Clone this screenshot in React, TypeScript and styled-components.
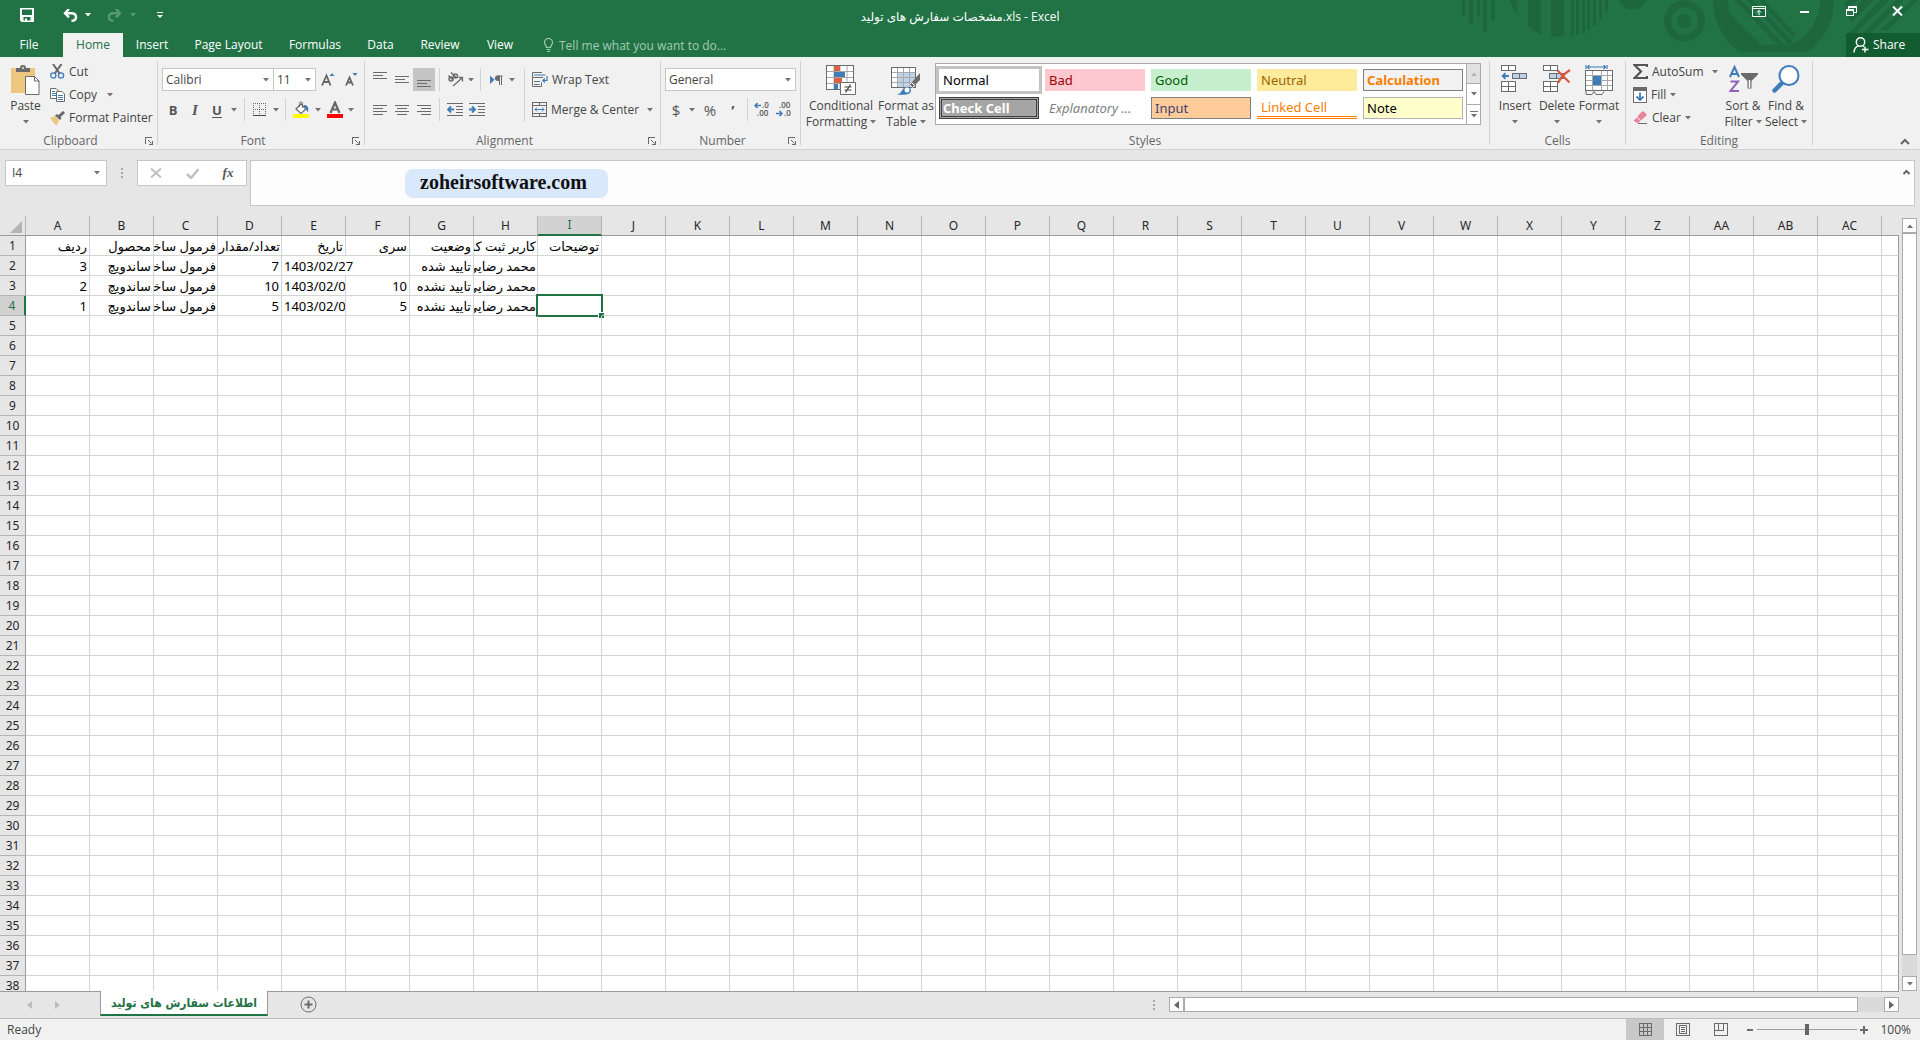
import React from 'react';
import styled, { createGlobalStyle, css } from 'styled-components';

const GREEN = '#217346';
const LINE = '#d4d4d4';
const UI = '"Open Sans", "Noto Sans", "DejaVu Sans", sans-serif';
const SHEET = '"Noto Sans", "DejaVu Sans", sans-serif';

const Global = createGlobalStyle`
  *, *::before, *::after { box-sizing: border-box; }
  body { margin: 0; background: #e6e6e6; color: #444; font: 12px/16px ${UI}; overflow: hidden; }
  button, input, select, textarea { margin: 0; padding: 0; border: 0; background: none; color: inherit; font: inherit; }
  svg { display: block; flex: none; }
`;

const Window = styled.div`
  display: flex;
  flex-direction: column;
  height: 100vh;
`;

/* ---------- title bar and tabs ---------- */

const Top = styled.header`
  position: relative;
  background: ${GREEN};
  color: #fff;
`;

const Pattern = styled.svg`
  position: absolute;
  top: 0;
  right: 0;
  fill: #1e673e;
  stroke: none;
`;

const TitleRow = styled.div`
  position: relative;
  display: grid;
  grid-template-columns: 1fr auto 1fr;
  height: 33px;
`;

const Quick = styled.div`
  display: flex;
  align-items: center;
  height: 30px;
  padding-left: 16px;
`;

const QuickButton = styled.button<{ $w: number; $gap?: number; $faded?: boolean }>`
  display: flex;
  align-items: center;
  justify-content: center;
  width: ${p => p.$w}px;
  height: 22px;
  margin-left: ${p => p.$gap ?? 0}px;
  color: #fff;
  opacity: ${p => (p.$faded ? 0.25 : 1)};
`;

const Title = styled.h1`
  margin: 0;
  font-size: 12px;
  font-weight: 400;
  line-height: 33px;
`;

const WindowButtons = styled.div`
  display: flex;
  justify-content: flex-end;
  height: 30px;
`;

const TabRow = styled.nav`
  position: relative;
  display: flex;
  height: 24px;
`;

const Tab = styled.button<{ $w: number; $active?: boolean }>`
  width: ${p => p.$w}px;
  line-height: 24px;
  color: ${p => (p.$active ? GREEN : '#fff')};
  background: ${p => (p.$active ? '#f1f1f1' : 'transparent')};
`;

const FileTab = styled(Tab)`
  margin-right: 5px;
`;

const TellMe = styled.label`
  display: flex;
  align-items: center;
  gap: 5px;
  margin-left: 16px;
  color: #a3cbb3;
`;

const TellInput = styled.input`
  width: 200px;
  height: 24px;
  outline: none;
  &::placeholder { color: #a3cbb3; opacity: 1; }
`;

const Share = styled.button`
  display: flex;
  align-items: center;
  gap: 4px;
  width: 74px;
  margin-left: auto;
  padding-left: 7px;
  background: #125c32;
  color: #fff;
`;

/* ---------- ribbon ---------- */

const Ribbon = styled.section`
  display: flex;
  height: 93px;
  background: #f1f1f1;
  border-bottom: 1px solid #d2d2d2;
`;

const Group = styled.div<{ $w: number }>`
  display: flex;
  flex-direction: column;
  flex: none;
  width: ${p => p.$w}px;
`;

const GroupBody = styled.div<{ $pad?: number }>`
  display: flex;
  height: 76px;
  padding-left: ${p => p.$pad ?? 4}px;
`;

const GroupFooter = styled.div`
  display: flex;
  align-items: center;
  height: 16px;
  padding: 0 4px;
  color: #666;
`;

const GroupLabel = styled.span<{ $pad: number }>`
  flex: 1;
  padding-right: ${p => p.$pad}px;
  text-align: center;
`;

const GroupLine = styled.div`
  width: 1px;
  margin: 4px 0;
  background: ${LINE};
`;

const Big = styled.button<{ $w: number }>`
  display: flex;
  flex-direction: column;
  align-items: center;
  flex: none;
  width: ${p => p.$w}px;
  padding-top: 8px;
  white-space: nowrap;
  > svg { margin-bottom: 3px; }
`;

const BigLine = styled.span`
  display: flex;
  align-items: center;
  gap: 3px;
  height: 16px;
`;

const Stack = styled.div<{ $w?: number }>`
  display: flex;
  flex-direction: column;
  width: ${p => (p.$w ? p.$w + 'px' : 'auto')};
  padding-top: 3px;
`;

const Small = styled.button`
  display: flex;
  align-items: center;
  gap: 4px;
  height: 23px;
  white-space: nowrap;
`;

const Rows = styled.div<{ $w?: number }>`
  display: flex;
  flex-direction: column;
  gap: 7px;
  width: ${p => (p.$w ? p.$w + 'px' : 'auto')};
  padding-top: 11px;
`;

const Row = styled.div`
  display: flex;
  height: 23px;
`;

const Tool = styled.button<{ $w?: number; $on?: boolean }>`
  display: flex;
  align-items: center;
  justify-content: center;
  flex: none;
  width: ${p => p.$w ?? 22}px;
  height: 23px;
  color: #555;
  background: ${p => (p.$on ? '#c5c5c5' : 'transparent')};
`;

const Glyph = styled.span<{ $size?: number; $kind?: 'italic' | 'underline' | 'light' }>`
  font-size: ${p => p.$size ?? 13}px;
  font-weight: ${p => (p.$kind === 'light' ? 400 : 700)};
  ${p => p.$kind === 'italic' && css`font-family: "Liberation Serif", serif; font-style: italic;`}
  ${p => p.$kind === 'underline' && css`text-decoration: underline; text-underline-offset: 2px;`}
`;

const Divider = styled.div`
  width: 1px;
  margin: 0 4px;
  background: ${LINE};
`;

const TallDivider = styled.div`
  width: 1px;
  height: 54px;
  margin: 11px 7px 0 0;
  background: ${LINE};
`;

const ComboBox = styled.label<{ $w: number }>`
  display: grid;
  align-items: center;
  width: ${p => p.$w}px;
  height: 23px;
  border: 1px solid #c6c6c6;
  background: #fff;
  & + & { margin-left: -1px; }
  > * { grid-area: 1 / 1; }
  > svg { justify-self: end; margin-right: 4px; pointer-events: none; }
`;

const Select = styled.select`
  appearance: none;
  width: 100%;
  height: 21px;
  padding-left: 3px;
  outline: none;
`;

const Gallery = styled.div`
  display: flex;
  margin-top: 6px;
  height: 62px;
  border: 1px solid #ababab;
  background: #fff;
`;

const Swatches = styled.div`
  display: grid;
  grid-template-columns: repeat(5, 100px);
  grid-auto-rows: 22px;
  gap: 6px;
  padding: 5px 3px;
`;

type SwatchStyle = { bg: string; fg: string; line?: string; kind?: string };
const Swatch = styled.button<{ $s: SwatchStyle }>`
  padding: 0 3px 1px;
  text-align: left;
  font: 13px/18px ${SHEET};
  color: ${p => p.$s.fg};
  background: ${p => p.$s.bg};
  border: ${p => (p.$s.line ? `1px solid ${p.$s.line}` : '1px solid transparent')};
  ${p => p.$s.kind === 'selected' && css`box-shadow: 0 0 0 3px #c3c3c3;`}
  ${p => p.$s.kind === 'check' && css`border: 3px double #3f3f3f; padding: 0 1px 1px; line-height: 16px; font-weight: 700;`}
  ${p => p.$s.kind === 'bold' && css`font-weight: 700;`}
  ${p => p.$s.kind === 'italic' && css`font-style: italic;`}
  ${p => p.$s.kind === 'linked' && css`border: 0; border-bottom: 3px double #ff8001; padding: 0 4px;`}
`;

const GalleryButtons = styled.div`
  display: flex;
  flex-direction: column;
  width: 14px;
  border-left: 1px solid #ababab;
`;

const GalleryButton = styled.button<{ $off?: boolean }>`
  display: flex;
  flex: 1;
  align-items: center;
  justify-content: center;
  background: ${p => (p.$off ? '#e1e1e1' : '#fff')};
  & + & { border-top: 1px solid #ababab; }
`;

const Collapse = styled.button`
  align-self: flex-end;
  margin: 0 10px 4px auto;
`;

/* ---------- formula bar ---------- */

const FormulaRow = styled.section`
  display: flex;
  align-items: flex-start;
  padding: 10px 5px;
`;

const NameBox = styled.div`
  display: flex;
  align-items: center;
  width: 102px;
  height: 26px;
  padding-right: 6px;
  border: 1px solid #c6c6c6;
  background: #fff;
`;

const NameInput = styled.input`
  flex: 1;
  min-width: 0;
  padding-left: 6px;
  outline: none;
`;

const Dots = styled.span`
  display: flex;
  justify-content: center;
  width: 30px;
  padding-top: 8px;
`;

const EntryButtons = styled.div`
  display: flex;
  align-items: center;
  justify-content: space-between;
  width: 110px;
  height: 26px;
  padding: 0 11px;
  border: 1px solid #c6c6c6;
  background: #fff;
`;

const FormulaBox = styled.div`
  display: flex;
  flex: 1;
  justify-content: space-between;
  align-items: flex-start;
  height: 46px;
  margin-left: 3px;
  padding: 8px 4px 0 154px;
  border: 1px solid #c6c6c6;
  background: #fdfdfd;
`;

const Site = styled.span`
  width: 203px;
  padding-bottom: 3px;
  padding-right: 6px;
  border-radius: 8px;
  background: #dae8fc;
  color: #111;
  text-align: center;
  font: 700 20px/26px "Liberation Serif", serif;
`;

/* ---------- sheet ---------- */

const SheetArea = styled.main`
  display: flex;
  flex: 1;
  min-height: 0;
`;

const GridView = styled.div`
  flex: 1;
  min-width: 0;
  overflow: hidden;
`;

const Table = styled.table`
  width: 100%;
  table-layout: fixed;
  border-spacing: 0;
  background: #fff;
  color: #000;
  font: 13px/18px ${SHEET};
`;

const RowCol = styled.col`
  width: 26px;
`;

const DataCol = styled.col`
  width: 64px;
`;

const ColHead = styled.th<{ $on?: boolean; $last?: boolean }>`
  height: 20px;
  padding: 0;
  font-weight: 400;
  font-size: 12px;
  color: ${p => (p.$on ? GREEN : '#262626')};
  background: ${p => (p.$on ? '#d2d2d2' : '#e6e6e6')};
  border-bottom: ${p => (p.$on ? `2px solid ${GREEN}` : '1px solid #9b9b9b')};
  border-right: ${p => (p.$last ? '0' : '1px solid #b4b4b4')};
`;

const Corner = styled(ColHead)`
  > svg { margin: 2px 3px 0 auto; }
`;

const RowHead = styled.th<{ $on?: boolean }>`
  height: 20px;
  padding: 0;
  font-weight: 400;
  font-size: 12px;
  color: ${p => (p.$on ? GREEN : '#262626')};
  background: ${p => (p.$on ? '#d2d2d2' : '#e6e6e6')};
  border-bottom: 1px solid #b4b4b4;
  border-right: ${p => (p.$on ? `2px solid ${GREEN}` : '1px solid #9b9b9b')};
`;

const Cell = styled.td<{ $left?: boolean; $edge?: boolean }>`
  position: relative;
  height: 20px;
  padding: 0 2px;
  overflow: hidden;
  white-space: nowrap;
  text-align: ${p => (p.$left ? 'left' : 'right')};
  border-bottom: 1px solid ${LINE};
  border-right: 1px solid ${p => (p.$edge ? '#9b9b9b' : LINE)};
`;

const ActiveCell = styled(Cell)`
  overflow: visible;
  &::before {
    content: '';
    position: absolute;
    inset: -2px;
    border: 2px solid ${GREEN};
  }
  &::after {
    content: '';
    position: absolute;
    right: -3px;
    bottom: -3px;
    width: 6px;
    height: 6px;
    border: solid #fff;
    border-width: 1px 0 0 1px;
    background: ${GREEN};
  }
`;

const VScroll = styled.div`
  display: flex;
  flex-direction: column;
  width: 15px;
  margin: 2px 3px 0;
  background: #dadada;
`;

const HScroll = styled.div`
  display: flex;
  width: 730px;
  height: 15px;
  background: #dadada;
`;

const ScrollButton = styled.button`
  display: flex;
  flex: none;
  align-items: center;
  justify-content: center;
  width: 15px;
  height: 15px;
  border: 1px solid #ababab;
  background: #fff;
  color: #666;
`;

const Thumb = styled.div<{ $grow: number }>`
  flex: ${p => p.$grow} 0 0;
  border: 1px solid #ababab;
  background: #fff;
`;

const Slack = styled.div<{ $grow: number }>`
  flex: ${p => p.$grow} 0 0;
`;

const SheetBar = styled.footer`
  display: flex;
  align-items: center;
  height: 27px;
  padding-right: 21px;
  background: linear-gradient(#9b9b9b, #9b9b9b) 0 0 / calc(100% - 21px) 1px no-repeat #e6e6e6;
`;

const SheetNav = styled.div`
  display: flex;
  align-items: center;
  justify-content: center;
  gap: 23px;
  width: 86px;
  color: #bdbdbd;
`;

const SheetTab = styled.button`
  align-self: flex-start;
  width: 168px;
  height: 25px;
  margin-left: 14px;
  border: solid #9b9b9b;
  border-width: 0 1px 0 1px;
  border-bottom: 2px solid ${GREEN};
  background: #fff;
  color: ${GREEN};
  font: 700 12px/16px "DejaVu Sans Condensed", "DejaVu Sans", sans-serif;
  white-space: nowrap;
`;

const AddSheet = styled.button`
  margin-left: 32px;
`;

const BarGrip = styled.span`
  margin: 0 14px 0 auto;
`;

const Status = styled.footer`
  display: flex;
  align-items: center;
  height: 22px;
  padding: 0 9px 0 7px;
  border-top: 1px solid #bdbdbd;
  background: #f1f1f1;
`;

const ViewButtons = styled.div`
  display: flex;
  align-self: stretch;
  margin: 0 3px 0 auto;
`;

const ViewButton = styled.button<{ $on?: boolean }>`
  display: flex;
  align-items: center;
  justify-content: center;
  width: 38px;
  background: ${p => (p.$on ? '#c8c8c8' : 'transparent')};
`;

const ZoomButton = styled.button`
  width: 14px;
  display: flex;
  justify-content: center;
`;

const ZoomSlider = styled.input`
  appearance: none;
  width: 100px;
  height: 12px;
  background: linear-gradient(#a0a0a0, #a0a0a0) 0 50% / 100% 1px no-repeat;
  outline: none;
  &::-webkit-slider-thumb {
    appearance: none;
    width: 4px;
    height: 11px;
    background: #666;
  }
`;

const ZoomValue = styled.button`
  width: 40px;
  text-align: right;
`;

/* ---------- icons ---------- */

const G = '#6b6b6b';
const BLUE = '#3f7cb8';

type IconProps = { w: number; h: number; children: React.ReactNode; crisp?: boolean };
const Icon = ({ w, h, children, crisp }: IconProps) => (
  <svg width={w} height={h} viewBox={`0 0 ${w} ${h}`} fill="none" stroke={G} shapeRendering={crisp ? 'crispEdges' : 'auto'} aria-hidden="true">
    {children}
  </svg>
);

const Caret = ({ dir = 'down', color = '#737373' }: { dir?: 'down' | 'up'; color?: string }) => (
  <svg width="6" height="4" viewBox="0 0 6 4" fill={color} aria-hidden="true">
    <path d={dir === 'down' ? 'M0 0h6L3 3.5z' : 'M0 4h6L3 .5z'} />
  </svg>
);

const Side = ({ dir }: { dir: 'left' | 'right' }) => (
  <svg width="5" height="8" viewBox="0 0 5 8" fill="currentColor" aria-hidden="true">
    <path d={dir === 'left' ? 'M5 0v8L0 4z' : 'M0 0v8l5-4z'} />
  </svg>
);

const Grip = () => (
  <svg width="2" height="10" viewBox="0 0 2 10" fill="#a6a6a6" aria-hidden="true"><path d="M0 0h2v2H0zM0 4h2v2H0zM0 8h2v2H0z" /></svg>
);

const Chevron = () => (
  <Icon w={10} h={7}><path d="M1 6l4-4 4 4" stroke="#666" strokeWidth="2" /></Icon>
);

const Launcher = () => (
  <Icon w={8} h={8} crisp>
    <path d="M.5 7V.5H7" />
    <path d="M3 3l3.5 3.5" shapeRendering="auto" />
    <path d="M7.5 4v3.5H4" strokeWidth="2" />
  </Icon>
);

const Lines = ({ widths, x = 'left', top = 1 }: { widths: number[]; x?: 'left' | 'center' | 'right'; top?: number }) => (
  <Icon w={14} h={16} crisp>
    {widths.map((w, i) => {
      const s = x === 'left' ? 0 : x === 'right' ? 14 - w : (14 - w) / 2;
      return <path key={i} d={`M${s} ${top + i * 3 + 0.5}h${w}`} />;
    })}
  </Icon>
);

const Save = () => (
  <Icon w={14} h={14}>
    <path fill="#fff" stroke="none" fillRule="evenodd" d="M0 0h14v14H1.5L0 12.5zM2 1.5V7h10V1.5zM3.5 9v3.5H5V10.5h2v2h3.5V9z" />
  </Icon>
);
const Undo = () => (
  <Icon w={15} h={13}>
    <path d="M6 0L2 4.200l4 4.200M2 4.200h6.500q4.500 0 4.500 3.800t-4.500 3.800" stroke="#fff" strokeWidth="2.400" />
  </Icon>
);
const Redo = () => (
  <Icon w={15} h={13}>
    <path d="M9 0l4 4.200-4 4.200M13 4.200H6.500Q2 4.200 2 8t4.500 3.800" stroke="#fff" strokeWidth="2.400" />
  </Icon>
);
const Customize = () => (
  <Icon w={6} h={7}><path d="M0 .5h6" stroke="#fff" /><path d="M0 3h6L3 6z" fill="#fff" stroke="none" /></Icon>
);
const RibbonOptions = () => (
  <Icon w={14} h={11}>
    <path d="M.5.5h13v10H.5zM1 2.500h12M7 9V4.500M4.800 6.500L7 4.300l2.200 2.200" stroke="#fff" />
  </Icon>
);
const Minimize = () => <Icon w={10} h={10} crisp><path d="M0 6h9" stroke="#fff" strokeWidth="2" /></Icon>;
const Restore = () => (
  <Icon w={11} h={10} crisp><path d="M.5 3.500h7v6h-7zM0 4.500h8M2.500 3V.5h8v6H8M2 1.500h9" stroke="#fff" /></Icon>
);
const Close = () => <Icon w={11} h={10}><path d="M1 .5l9 9M10 .5l-9 9" stroke="#fff" strokeWidth="2" /></Icon>;
const Bulb = () => (
  <Icon w={11} h={14}>
    <path d="M3.500 9.500C3.500 7.500 1.500 7 1.500 4.500a4 4 0 0 1 8 0c0 2.500-2 3-2 5zM3.500 11.500h4M4 13.500h3" stroke="#a3cbb3" strokeWidth="1.200" />
  </Icon>
);
const Person = () => (
  <Icon w={16} h={16}>
    <circle cx="7.500" cy="5" r="4.200" stroke="#fff" strokeWidth="1.400" />
    <path d="M1 15.500c.2-3.500 1.800-5.800 4.500-6.600M10 9l1 .7M12 9.500v6M9 12.500h6.500" stroke="#fff" strokeWidth="1.400" />
  </Icon>
);

const Paste = () => (
  <Icon w={29} h={30}>
    <path d="M0 3h24v25H0z" fill="#eec77f" stroke="none" />
    <path d="M5 3h4a3 3 0 0 1 6 0h4v4H5z" fill="#6b6b6b" stroke="none" />
    <circle cx="12" cy="3" r="1" fill="#f1f1f1" stroke="none" />
    <path d="M14.500 11.500h9l4.500 4.500v13.500H14.500z" fill="#fff" />
    <path d="M23.500 11.500V16H28" />
  </Icon>
);
const Cut = () => (
  <Icon w={15} h={15}>
    <path d="M3 0l7 10M11.500 0l-7 10" strokeWidth="2" stroke="#666" />
    <circle cx="3.300" cy="11.500" r="2.600" stroke={BLUE} strokeWidth="1.300" />
    <circle cx="11" cy="11.500" r="2.600" stroke={BLUE} strokeWidth="1.300" />
  </Icon>
);
const Copy = () => (
  <Icon w={15} h={14}>
    <path d="M.5.5H6L8.500 3v7.500h-8z" fill="#fff" />
    <path d="M2 3.500h3M2 5.500h4M2 7.500h4" stroke={BLUE} />
    <path d="M6.500 3.500H12L14.500 6v7.500h-8z" fill="#fff" />
    <path d="M8 7.500h5M8 9.500h5M8 11.500h5" stroke={BLUE} />
  </Icon>
);
const Painter = () => (
  <Icon w={15} h={14}>
    <path d="M0 7l5-2 4 4-2 5-2-.5z" fill="#eec77f" stroke="none" />
    <path d="M5 4.500l2-1.500 4.500 4L10 9z" fill="#666" stroke="none" />
    <path d="M9 5.500L14 1" strokeWidth="3" stroke="#666" />
  </Icon>
);
const Grow = ({ up }: { up?: boolean }) => (
  <Icon w={14} h={15}>
    <path d={up ? 'M1 13.500L5.500 3.500l4 10M3 10h5.500' : 'M2 13.500L5.500 5.500l3.500 8M3.500 10.500h4.500'} strokeWidth="1.800" stroke="#666" />
    <path d={up ? 'M8.500 4h5L11 1z' : 'M8.500 1h5L11 4z'} fill={BLUE} stroke="none" />
  </Icon>
);
const Borders = () => (
  <Icon w={14} h={14} crisp>
    <path d="M.5 0v12M6.500 0v12M12.500 0v12M0 .5h13M0 6.500h13" strokeDasharray="1 1" />
    <path d="M0 12.500h13" stroke="#444" />
  </Icon>
);
const Bucket = () => (
  <Icon w={16} h={17}>
    <path d="M3 8l5-5 5 5-5 4.500z" fill="#fff" strokeWidth="1.300" />
    <path d="M6.500 6V2.500a1.500 1.500 0 0 1 3 0V7" />
    <path d="M11 4c4 0 5 3 4 7-2-1-1-4-4-5z" fill={BLUE} stroke="none" />
    <path d="M0 13h16v4H0z" fill="#ff0" stroke="none" />
  </Icon>
);
const FontColor = () => (
  <Icon w={16} h={17}>
    <path d="M3.500 12L8 1.500 12.500 12M5 8.500h6" strokeWidth="2.200" stroke="#666" />
    <path d="M0 13h16v4H0z" fill="#f00" stroke="none" />
  </Icon>
);
const Orient = () => (
  <Icon w={17} h={15}>
    <circle cx="4" cy="7" r="2" strokeWidth="1.500" /><path d="M1.500 3.500l5 5" strokeWidth="1.500" />
    <circle cx="8.500" cy="4" r="2" strokeWidth="1.500" /><path d="M4 .5l5 5" strokeWidth="1.500" />
    <path d="M6 14l9-8M11.500 5.500H15.500V9.500" strokeWidth="1.300" />
  </Icon>
);
const Pilcrow = () => (
  <Icon w={13} h={10}>
    <path d="M0 .5v8.500l4.500-4.200z" fill={BLUE} stroke="none" />
    <path d="M9 1H7.500a2 2 0 0 0 0 4.500H9z" fill={G} />
    <path d="M9.500 1v9M11.500 1v9M7 1h5.500" />
  </Icon>
);
const Indent = ({ out }: { out?: boolean }) => (
  <Icon w={16} h={14} crisp>
    <path d="M0 .5h16M9 3.500h7M9 6.500h7M9 9.500h7M0 12.500h16" />
    <path d={out ? 'M1 6.500h6M4 3.500l-3 3 3 3' : 'M0 6.500h6M3 3.500l3 3-3 3'} stroke={BLUE} strokeWidth="1.800" shapeRendering="auto" />
  </Icon>
);
const Wrap = () => (
  <Icon w={16} h={16}>
    <path d="M10 .5H.5v5H11M.5 5.500v9h9v-4M2 9.500h6M2 12.500h5.500" />
    <path d="M2 3h11.500M15 4v4.500h-4M13 6.500l-2.200 2 2.200 2" stroke={BLUE} strokeWidth="1.200" />
  </Icon>
);
const Merge = () => (
  <Icon w={15} h={15} crisp>
    <path d="M.5.5h14v14H.5zM0 3.500h15M0 11.500h15M7.500 0v3M7.500 12v3" />
    <path d="M3 7.500h9" stroke={BLUE} />
    <path d="M5 5.500l-2 2 2 2M10 5.500l2 2-2 2" stroke={BLUE} shapeRendering="auto" />
  </Icon>
);

const DecimalText = styled.text`
  font: 600 8px ${UI};
  fill: #555;
  stroke: none;
`;
const Decimal = ({ more }: { more?: boolean }) => (
  <Icon w={17} h={19}>
    <DecimalText x={more ? 8 : 3} y="8">{more ? '.0' : '.00'}</DecimalText>
    <DecimalText x={more ? 3 : 8} y="16">{more ? '.00' : '.0'}</DecimalText>
    <path d={more ? 'M7 5.500H1M3.500 3L1 5.500 3.500 8' : 'M0 13.500h6M3.500 11L6 13.500 3.500 16'} stroke={BLUE} strokeWidth="1.500" />
  </Icon>
);

const CondFormat = () => (
  <Icon w={30} h={30}>
    <path d="M.5.5h27v24H.5z" fill="#fff" />
    <path d="M.5 6.500h27M.5 12.500h27M.5 18.500h27M8 .5v24M14 .5v24M21 .5v24" stroke="#a8a8a8" />
    <path d="M8 1h6v5H8zM8 13h8v5H8z" fill="#d9633f" stroke="none" />
    <path d="M8 7h11v5H8zM8 19h4v5H8z" fill={BLUE} stroke="none" />
    <path d="M.5.5h27v24H.5z" />
    <path d="M14.500 17.500h15v12h-15z" fill="#fff" />
    <path d="M18.500 22h7M18.500 25h7M24.500 19.500l-5 8" strokeWidth="1.200" stroke="#444" />
  </Icon>
);
const FormatTable = () => (
  <Icon w={30} h={30}>
    <path d="M.5 2.500h24v20H.5z" fill="#fff" />
    <path d="M6.500 8h18v14h-18z" fill="#bcd2e8" stroke="none" />
    <path d="M.5 7.500h24M.5 12.500h24M.5 17.500h24M6.500 2.500v20M12.500 2.500v20M18.500 2.500v20" stroke="#a8a8a8" />
    <path d="M.5 2.500h24v20H.5z" />
    <path d="M29 8v7l-5 5-3-3z" fill="#6b6b6b" stroke="none" />
    <path d="M20.500 17.500l3 3-2 2-3-3z" fill="#6b6b6b" stroke="#f1f1f1" />
    <path d="M6 29.500c4-1 4-3 6-5.500 3-4 8-2 8 1.500 0 4-6 5-14 4z" fill={BLUE} stroke="none" />
    <circle cx="16" cy="25" r="2.500" fill="#fff" stroke="none" />
  </Icon>
);
const CellIcon = ({ remove }: { remove?: boolean }) => (
  <Icon w={28} h={30}>
    <g shapeRendering="crispEdges">
      <path d="M.5.5h14v5H.5zM7.500.5v5M.5 16.500h14v10H.5zM7.500 16.500v10M.5 21.500h14" fill="#fff" />
      <path d={remove ? 'M6.500 8.500h14v5h-14zM13.500 8.500v5' : 'M11.500 8.500h14v5h-14zM18.500 8.500v5'} fill="#bcd2e8" />
    </g>
    {remove
      ? <path d="M14.500 5.500l12 12M27 5q-8 5-12 13" stroke="#d9583b" strokeWidth="2.200" />
      : <path d="M8 11H2M4.500 8.200L1.700 11l2.800 2.800" stroke={BLUE} strokeWidth="1.800" />}
  </Icon>
);
const FormatCells = () => (
  <Icon w={28} h={30}>
    <path d="M.5 5.500h27v20H.5z" fill="#fff" />
    <path d="M.5 10.500h27M.5 15.500h27M.5 20.500h27M7.500 5.500v20M16.500 5.500v20M22.500 5.500v20" stroke="#a8a8a8" />
    <path d="M.5 5.500h27v20H.5zM1 26v3.500h6l2-3 2 3h6l2-3" />
    <path d="M8 11h8v9H8z" fill={BLUE} stroke="none" />
    <path d="M1 0v4M22 0v4M2 2h19M4.500 0l-2 2 2 2M18.500 0l2 2-2 2" stroke={BLUE} strokeWidth="1.200" />
  </Icon>
);
const Sigma = () => <Icon w={15} h={15}><path d="M14 3V1H1.500L8 7.500 1.500 14H14v-2" strokeWidth="2.200" stroke="#555" /></Icon>;
const Fill = () => (
  <Icon w={14} h={16}>
    <path d="M.5.5h13v15H.5z" fill="#fff" /><path d="M0 0h14v4H0z" fill={G} stroke="none" />
    <path d="M7 5.500V13M3.500 9.500L7 13l3.500-3.500" stroke={BLUE} strokeWidth="1.800" />
  </Icon>
);
const Eraser = () => (
  <Icon w={15} h={13}>
    <path d="M4 6l5-5.500h2L14 4 8 9.500z" fill="#e9859a" stroke="none" />
    <path d="M3.500 6.500L.5 9.500 3 12h2.500L8 9.800z" fill="#e9859a" stroke="#f1f1f1" strokeWidth=".6" />
    <path d="M5 12.500h9" />
  </Icon>
);
const SortFilter = () => (
  <Icon w={29} h={30}>
    <path d="M1 12L5.500 2 10 12M2.500 9h6" stroke={BLUE} strokeWidth="2" />
    <path d="M1.500 16.500H9L1.500 26H10" stroke="#9160bd" strokeWidth="2" />
    <path d="M12 8h17v1.500L22.500 16v7.500h-4V16L12 9.500z" fill="#6b6b6b" stroke="none" />
    <path d="M20.500 15v8" stroke="#fff" strokeWidth="1.500" />
  </Icon>
);
const Find = () => (
  <Icon w={28} h={30}>
    <path d="M2.500 25.500L10 18" stroke={BLUE} strokeWidth="4.500" strokeLinecap="round" />
    <circle cx="17" cy="10.500" r="9.500" fill="#fff" stroke={BLUE} strokeWidth="2" />
  </Icon>
);

/* ---------- data ---------- */

const TABS: [string, number][] = [
  ['Insert', 58], ['Page Layout', 95], ['Formulas', 78], ['Data', 53], ['Review', 66], ['View', 54],
];

const STYLES: [string, SwatchStyle][] = [
  ['Normal', { bg: '#fff', fg: '#000', kind: 'selected' }],
  ['Bad', { bg: '#ffc7ce', fg: '#9c0006' }],
  ['Good', { bg: '#c6efce', fg: '#006100' }],
  ['Neutral', { bg: '#ffeb9c', fg: '#9c6500' }],
  ['Calculation', { bg: '#f2f2f2', fg: '#fa7d00', line: '#7f7f7f', kind: 'bold' }],
  ['Check Cell', { bg: '#a5a5a5', fg: '#fff', kind: 'check' }],
  ['Explanatory ...', { bg: '#fff', fg: '#7f7f7f', kind: 'italic' }],
  ['Input', { bg: '#ffcc99', fg: '#3f3f76', line: '#7f7f7f' }],
  ['Linked Cell', { bg: '#fff', fg: '#fa7d00', kind: 'linked' }],
  ['Note', { bg: '#ffffcc', fg: '#000', line: '#b2b2b2' }],
];

const COLUMNS = [...'ABCDEFGHIJKLMNOPQRSTUVWXYZ', 'AA', 'AB', 'AC'];

const DATA: string[][] = [
  ['ردیف', 'محصول', 'فرمول ساخت', 'تعداد/مقدار', 'تاریخ', 'سری', 'وضعیت', 'کاربر ثبت کننده', 'توضیحات'],
  ['3', 'ساندویچ', 'فرمول ساخت', '7', '1403/02/27', '', 'تایید شده', 'محمد رضایی'],
  ['2', 'ساندویچ', 'فرمول ساخت', '10', '1403/02/0', '10', 'تایید نشده', 'محمد رضایی'],
  ['1', 'ساندویچ', 'فرمول ساخت', '5', '1403/02/0', '5', 'تایید نشده', 'محمد رضایی'],
];

const isNumber = (s: string) => /^\d/.test(s);

const SheetRow = ({ index }: { index: number }) => {
  const values = DATA[index] ?? [];
  const cells: React.ReactNode[] = [];
  for (let c = 0; c < COLUMNS.length; c++) {
    const v = values[c] ?? '';
    const isDate = v.includes('/') && isNumber(v);
    if (index === 3 && c === 8) {
      cells.push(<ActiveCell key={c} />);
    } else if (isDate && values[c + 1] === '') {
      cells.push(<Cell key={c} colSpan={2} $left>{v}</Cell>);
      c++;
    } else {
      cells.push(<Cell key={c} $left={isDate} dir={v && !isNumber(v) ? 'rtl' : undefined}>{v}</Cell>);
    }
  }
  return (
    <tr>
      <RowHead scope="row" $on={index === 3}>{index + 1}</RowHead>
      {cells}
      <Cell $edge />
    </tr>
  );
};

const Footer = ({ label, launcher }: { label: string; launcher?: boolean }) => (
  <GroupFooter>
    <GroupLabel $pad={launcher ? 8 : 0}>{label}</GroupLabel>
    {launcher && <button aria-label={`${label} settings`}><Launcher /></button>}
  </GroupFooter>
);

const Combo = ({ w, label, value }: { w: number; label: string; value: string }) => (
  <ComboBox $w={w}>
    <Select aria-label={label}><option>{value}</option></Select>
    <Caret />
  </ComboBox>
);

const Drop = ({ label, w = 10 }: { label: string; w?: number }) => (
  <Tool as="span" $w={w} title={`${label} options`}><Caret /></Tool>
);

export default function App() {
  return (
    <Window>
      <Global />
      <Top>
        <Pattern width="470" height="57" viewBox="0 0 470 57" aria-hidden="true">
          <path d="M12 0h3v16h-3zM19 0h4v24h-4zM27 0h3v16h-3zM33 0h4v32h-4zM41 0h4v21h-4zM60 0h7v16q-5-8-7-16zM78 0h13v34q-8-3-13-8zM101 0h13v37q-7 0-13-1zM121 0h3v36h-3zM126 0h3v35h-3zM132 0h3v33h-3zM137 0h3v30h-3zM143 0h3v26h-3zM149 0h3v20h-3zM155 0h3v12h-3z" />
          <path d="M169 0h27a14 13 0 0 1-27 0z" />
          <circle cx="234.500" cy="21" r="17" fill="none" stroke="#1e673e" strokeWidth="7" />
          <circle cx="234.500" cy="21" r="7" />
          <path d="M263 0h15c0 20 12 38 30 45h32c18-7 30-25 30-45h14c0 22-10 40-26 52h-68c-17-12-27-30-27-52z" />
          <path d="M284 0h7l44 45h-7zM297 0h6l40 41-4 4zM309 0h5l32 34-3 4zM278 12l34 33h-8q-20-12-26-33z" />
          <path d="M398 0h10l-10 9-4-4zM412 0h12l-22 22-4-4zM430 0h10l-34 33h-7zM446 0h8l-33 33h-8zM462 0h6l-30 30h-8z" />
        </Pattern>
        <TitleRow>
          <Quick>
            <QuickButton $w={22} aria-label="Save"><Save /></QuickButton>
            <QuickButton $w={24} $gap={20} aria-label="Undo"><Undo /></QuickButton>
            <QuickButton $w={12} aria-label="Undo history"><Caret color="#fff" /></QuickButton>
            <QuickButton $w={24} $gap={8} $faded aria-label="Redo"><Redo /></QuickButton>
            <QuickButton $w={14} $faded aria-label="Redo history"><Caret color="#fff" /></QuickButton>
            <QuickButton $w={22} $gap={9} aria-label="Customize toolbar"><Customize /></QuickButton>
          </Quick>
          <Title>مشخصات سفارش های تولید.xls - Excel</Title>
          <WindowButtons>
            <QuickButton $w={46} aria-label="Ribbon display options"><RibbonOptions /></QuickButton>
            <QuickButton $w={46} aria-label="Minimize"><Minimize /></QuickButton>
            <QuickButton $w={46} aria-label="Restore"><Restore /></QuickButton>
            <QuickButton $w={46} aria-label="Close"><Close /></QuickButton>
          </WindowButtons>
        </TitleRow>
        <TabRow>
          <FileTab $w={58}>File</FileTab>
          <Tab $w={60} $active>Home</Tab>
          {TABS.map(([name, w]) => <Tab key={name} $w={w}>{name}</Tab>)}
          <TellMe>
            <Bulb />
            <TellInput aria-label="Tell me" placeholder="Tell me what you want to do..." />
          </TellMe>
          <Share><Person />Share</Share>
        </TabRow>
      </Top>

      <Ribbon>
        <Group $w={157}>
          <GroupBody $pad={1}>
            <Big $w={49}>
              <Paste />
              <BigLine>Paste</BigLine>
              <BigLine><Caret /></BigLine>
            </Big>
            <Stack>
              <Small><Cut />Cut</Small>
              <Small><Copy />Copy<Drop label="Copy" w={18} /></Small>
              <Small><Painter />Format Painter</Small>
            </Stack>
          </GroupBody>
          <Footer label="Clipboard" launcher />
        </Group>
        <GroupLine />

        <Group $w={206}>
          <GroupBody>
            <Rows>
              <Row>
                <Combo w={112} label="Font" value="Calibri" />
                <Combo w={43} label="Font size" value="11" />
                <Tool $w={24} aria-label="Increase font size"><Grow up /></Tool>
                <Tool $w={22} aria-label="Decrease font size"><Grow /></Tool>
              </Row>
              <Row>
                <Tool aria-label="Bold"><Glyph>B</Glyph></Tool>
                <Tool aria-label="Italic"><Glyph $kind="italic" $size={15}>I</Glyph></Tool>
                <Tool aria-label="Underline"><Glyph $kind="underline">U</Glyph></Tool>
                <Drop label="Underline" w={12} />
                <Divider />
                <Tool aria-label="Borders"><Borders /></Tool>
                <Drop label="Borders" />
                <Divider />
                <Tool aria-label="Fill color"><Bucket /></Tool>
                <Drop label="Fill color" w={12} />
                <Tool aria-label="Font color"><FontColor /></Tool>
                <Drop label="Font color" />
              </Row>
            </Rows>
          </GroupBody>
          <Footer label="Font" launcher />
        </Group>
        <GroupLine />

        <Group $w={295}>
          <GroupBody>
            <Rows $w={155}>
              <Row>
                <Tool aria-label="Top align"><Lines widths={[14, 10, 14]} top={0} /></Tool>
                <Tool aria-label="Middle align"><Lines widths={[14, 10, 14]} top={4} /></Tool>
                <Tool aria-label="Bottom align" $on><Lines widths={[14, 10, 14]} top={8} /></Tool>
                <Divider />
                <Tool aria-label="Orientation"><Orient /></Tool>
                <Drop label="Orientation" />
                <Divider />
                <Tool aria-label="Text direction"><Pilcrow /></Tool>
                <Drop label="Text direction" />
              </Row>
              <Row>
                <Tool aria-label="Align left"><Lines widths={[14, 10, 14, 10]} top={3} /></Tool>
                <Tool aria-label="Center"><Lines widths={[14, 10, 14, 10]} x="center" top={3} /></Tool>
                <Tool aria-label="Align right"><Lines widths={[14, 10, 14, 10]} x="right" top={3} /></Tool>
                <Divider />
                <Tool aria-label="Decrease indent"><Indent out /></Tool>
                <Tool aria-label="Increase indent"><Indent /></Tool>
              </Row>
            </Rows>
            <TallDivider />
            <Rows>
              <Small><Wrap />Wrap Text</Small>
              <Small><Merge />Merge &amp; Center<Drop label="Merge" w={14} /></Small>
            </Rows>
          </GroupBody>
          <Footer label="Alignment" launcher />
        </Group>
        <GroupLine />

        <Group $w={139}>
          <GroupBody>
            <Rows>
              <Row><Combo w={131} label="Number format" value="General" /></Row>
              <Row>
                <Tool aria-label="Currency"><Glyph $kind="light" $size={15}>$</Glyph></Tool>
                <Drop label="Currency" />
                <Tool $w={26} aria-label="Percent"><Glyph $kind="light" $size={15}>%</Glyph></Tool>
                <Tool $w={20} aria-label="Comma"><Glyph $size={15}>’</Glyph></Tool>
                <Divider />
                <Tool $w={20} aria-label="Increase decimal"><Decimal more /></Tool>
                <Tool $w={24} aria-label="Decrease decimal"><Decimal /></Tool>
              </Row>
            </Rows>
          </GroupBody>
          <Footer label="Number" launcher />
        </Group>
        <GroupLine />

        <Group $w={688}>
          <GroupBody>
            <Big $w={72}>
              <CondFormat />
              <BigLine>Conditional</BigLine>
              <BigLine>Formatting <Caret /></BigLine>
            </Big>
            <Big $w={58}>
              <FormatTable />
              <BigLine>Format as</BigLine>
              <BigLine>Table <Caret /></BigLine>
            </Big>
            <Gallery>
              <Swatches>
                {STYLES.map(([name, s]) => <Swatch key={name} $s={s}>{name}</Swatch>)}
              </Swatches>
              <GalleryButtons>
                <GalleryButton $off aria-label="Previous styles"><Caret dir="up" color="#b5b5b5" /></GalleryButton>
                <GalleryButton aria-label="Next styles"><Caret /></GalleryButton>
                <GalleryButton aria-label="More styles">
                  <svg width="8" height="7" viewBox="0 0 8 7" fill="#737373" aria-hidden="true"><path d="M0 0h8v1H0zM1 3h6L4 6.500z" /></svg>
                </GalleryButton>
              </GalleryButtons>
            </Gallery>
          </GroupBody>
          <Footer label="Styles" />
        </Group>
        <GroupLine />

        <Group $w={135}>
          <GroupBody>
            <Big $w={42}><CellIcon /><BigLine>Insert</BigLine><BigLine><Caret /></BigLine></Big>
            <Big $w={42}><CellIcon remove /><BigLine>Delete</BigLine><BigLine><Caret /></BigLine></Big>
            <Big $w={42}><FormatCells /><BigLine>Format</BigLine><BigLine><Caret /></BigLine></Big>
          </GroupBody>
          <Footer label="Cells" />
        </Group>
        <GroupLine />

        <Group $w={186}>
          <GroupBody $pad={7}>
            <Stack $w={88}>
              <Small><Sigma />AutoSum<Drop label="AutoSum" w={14} /></Small>
              <Small><Fill />Fill <Caret /></Small>
              <Small><Eraser />Clear <Caret /></Small>
            </Stack>
            <Big $w={44}><SortFilter /><BigLine>Sort &amp;</BigLine><BigLine>Filter <Caret /></BigLine></Big>
            <Big $w={42}><Find /><BigLine>Find &amp;</BigLine><BigLine>Select <Caret /></BigLine></Big>
          </GroupBody>
          <Footer label="Editing" />
        </Group>
        <GroupLine />
        <Collapse aria-label="Collapse ribbon"><Chevron /></Collapse>
      </Ribbon>

      <FormulaRow>
        <NameBox>
          <NameInput aria-label="Name box" defaultValue="I4" />
          <Caret />
        </NameBox>
        <Dots><Grip /></Dots>
        <EntryButtons>
          <Tool $w={14} aria-label="Cancel"><Icon w={12} h={10}><path d="M1 .5l10 9M11 .5l-10 9" stroke="#c0c0c0" strokeWidth="2" /></Icon></Tool>
          <Tool $w={14} aria-label="Enter"><Icon w={13} h={11}><path d="M1 6l4 4 7.500-9" stroke="#c0c0c0" strokeWidth="2.500" /></Icon></Tool>
          <Tool $w={14} aria-label="Insert function"><Glyph $kind="italic">fx</Glyph></Tool>
        </EntryButtons>
        <FormulaBox>
          <Site>zoheirsoftware.com</Site>
          <button aria-label="Collapse formula bar"><Icon w={7} h={6}><path d="M.5 5l3-3 3 3" stroke="#666" strokeWidth="2" /></Icon></button>
        </FormulaBox>
      </FormulaRow>

      <SheetArea>
        <GridView>
          <Table>
            <colgroup>
              <RowCol />
              {COLUMNS.map(c => <DataCol key={c} />)}
              <col />
            </colgroup>
            <thead>
              <tr>
                <Corner aria-label="Select all">
                  <svg width="12" height="12" viewBox="0 0 12 12" fill="#b4b4b4" aria-hidden="true"><path d="M12 0v12H0z" /></svg>
                </Corner>
                {COLUMNS.map(c => <ColHead key={c} scope="col" $on={c === 'I'}>{c}</ColHead>)}
                <ColHead $last />
              </tr>
            </thead>
            <tbody>
              {Array.from({ length: 38 }, (_, i) => <SheetRow key={i} index={i} />)}
            </tbody>
          </Table>
        </GridView>
        <VScroll>
          <ScrollButton aria-label="Scroll up"><Caret dir="up" /></ScrollButton>
          <Thumb $grow={722} />
          <Slack $grow={21} />
          <ScrollButton aria-label="Scroll down"><Caret /></ScrollButton>
        </VScroll>
      </SheetArea>

      <SheetBar>
        <SheetNav><Side dir="left" /><Side dir="right" /></SheetNav>
        <SheetTab>اطلاعات سفارش های تولید</SheetTab>
        <AddSheet aria-label="New sheet">
          <Icon w={17} h={17}><circle cx="8.500" cy="8.500" r="7.500" /><path d="M8.500 4.500v8M4.500 8.500h8" strokeWidth="2" /></Icon>
        </AddSheet>
        <BarGrip><Grip /></BarGrip>
        <HScroll>
          <ScrollButton aria-label="Scroll left"><Side dir="left" /></ScrollButton>
          <Thumb $grow={674} />
          <Slack $grow={26} />
          <ScrollButton aria-label="Scroll right"><Side dir="right" /></ScrollButton>
        </HScroll>
      </SheetBar>

      <Status>
        <span>Ready</span>
        <ViewButtons>
          <ViewButton $on aria-label="Normal view"><Icon w={13} h={13} crisp><path d="M.5.5h12v12H.5zM4.500 0v13M8.500 0v13M0 4.500h13M0 8.500h13" /></Icon></ViewButton>
          <ViewButton aria-label="Page layout view"><Icon w={14} h={13} crisp><path d="M.5.5h13v12H.5zM3.500 2.500h7v8h-7zM5 4.500h4M5 6.500h4M5 8.500h4" /></Icon></ViewButton>
          <ViewButton aria-label="Page break view"><Icon w={14} h={13} crisp><path d="M.5.5h13v12H.5zM4.500 0v7M9.500 0v7.500H0" /></Icon></ViewButton>
        </ViewButtons>
        <ZoomButton aria-label="Zoom out"><Icon w={6} h={8} crisp><path d="M0 4h6" strokeWidth="2" /></Icon></ZoomButton>
        <ZoomSlider type="range" aria-label="Zoom" min="10" max="190" defaultValue="100" />
        <ZoomButton aria-label="Zoom in"><Icon w={8} h={8} crisp><path d="M0 4h8M4 0v8" strokeWidth="2" /></Icon></ZoomButton>
        <ZoomValue>100%</ZoomValue>
      </Status>
    </Window>
  );
}
